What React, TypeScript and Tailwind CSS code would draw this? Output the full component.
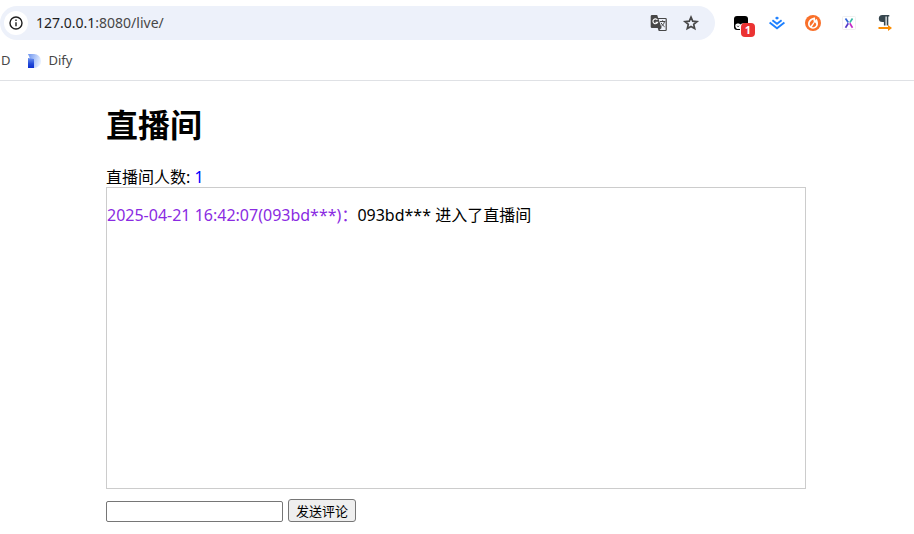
import { useState } from "react";
import type { FormEvent } from "react";

interface Message {
    time: string;
    user: string;
    text: string;
}

const initialMessages: Message[] = [
    { time: "2025-04-21 16:42:07", user: "093bd***", text: "093bd*** 进入了直播间" },
];

function InfoIcon() {
    return (
        <svg viewBox="0 0 16 16" className="h-4 w-4" fill="none" stroke="#1f1f1f" strokeWidth="1.4">
            <circle cx="8" cy="8" r="6" />
            <path d="M8 7.2v4M8 4.6v1.5" />
        </svg>
    );
}

function TranslateIcon() {
    return (
        <svg viewBox="0 0 18 18" className="h-[18px] w-[18px]">
            <path d="M2 1h5.2l1 3h7.3a1.3 1.3 0 0 1 1.3 1.3v10.4a1.3 1.3 0 0 1-1.3 1.3H8.700l-1-3H2A1.3 1.3 0 0 1 .7 12.700V2.300A1.3 1.3 0 0 1 2 1z" fill="#474747" />
            <path d="M8.600 5l3 9-2.200 2h6.200V5z" fill="#edf1fa" />
            <path d="M7.400 6A2.400 2.400 0 1 0 7.600 8.200H5.400" fill="none" stroke="#fff" strokeWidth="1.1" />
            <path d="M10 7.500h5.400M12.600 6.300v1.200M14.500 7.500c-.5 2.400-1.800 3.800-3.200 4.800M11 8.800c.8 1.500 2 2.800 3.600 4" fill="none" stroke="#474747" strokeWidth="1" />
        </svg>
    );
}

function StarIcon() {
    return (
        <svg viewBox="0 0 18 18" className="h-[18px] w-[18px]" fill="none" stroke="#474747" strokeWidth="1.7">
            <path d="M9 3.200l1.700 4 4.300.4-3.300 2.800 1 4.200L9 12.400l-3.700 2.200 1-4.200L3 7.600l4.300-.4z" />
        </svg>
    );
}

function MonkeyIcon() {
    return (
        <svg viewBox="0 0 16 16" className="h-4 w-4">
            <rect x="1" y="1" width="14" height="14" rx="3" fill="#000" />
            <path d="M2.300 10.500c0-1.500 1.500-2 2.700-2 1.200 0 2 .4 2.500 1.100.6-.8 1.500-1.100 2.700-1.100 1.600 0 2.800.6 2.800 2V16H7v-2H4c-1.200-.7-1.700-2-1.700-3.500z" fill="#fff" />
            <path d="M4 10.800c.5.900 1.700.9 2.200 0" fill="none" stroke="#000" strokeWidth="0.8" />
        </svg>
    );
}

function JuejinIcon() {
    return (
        <svg viewBox="0 0 16 16" className="h-4 w-4" fill="none" stroke="#1e80ff" strokeWidth="1.9">
            <path d="M8 1.400l2.100 1.600L8 4.700 5.900 3z" fill="#1e80ff" stroke="none" />
            <path d="M3.400 5.200L8 8.800l4.600-3.600M.6 7.400L8 13.200l7.400-5.800" />
        </svg>
    );
}

function FlameIcon() {
    return (
        <svg viewBox="0 0 16 16" className="h-4 w-4">
            <circle cx="8" cy="8" r="8" fill="#f9702a" />
            <path d="M9.800 2.200C6 3 3 5.500 3 8.800c0 2.800 2.200 4.900 5 4.900s5-2 5-4.900c0-2-.6-3.600-1.500-5l-1 1.700z" fill="#fff" />
            <path d="M8.300 4.500C6 5.500 4.700 7 4.700 9c0 .9.300 1.500.8 2.100L8.800 7zM9.800 7.200L6.900 12c2.300.7 4.300-.6 4.300-2.700 0-.9-.7-1.500-1.400-2.100z" fill="#f9702a" />
        </svg>
    );
}

function CrossIcon() {
    return (
        <svg viewBox="0 0 16 16" className="h-4 w-4" fill="none" strokeWidth="1.7">
            <rect x="1.5" y="1.5" width="13" height="13" rx="1" fill="#fff" stroke="#f0f0f0" strokeWidth="1" />
            <path d="M4.500 3.500L7.300 7.600" stroke="#2f62d8" />
            <path d="M11.500 3.500L8.800 7.600" stroke="#35b9a5" />
            <path d="M7.300 8.200L4.500 12.700" stroke="#5638c8" />
            <path d="M8.800 8.200l2.700 4.500" stroke="#c52bc8" />
        </svg>
    );
}

function PilcrowIcon() {
    return (
        <svg viewBox="0 0 16 16" className="h-4 w-4">
            <path d="M5.300 0h7v1.400h-1V10.500H9.700V1.400H8.500v9.100H6.900V7H5.300a3.500 3.500 0 0 1 0-7z" fill="#37474f" />
            <path d="M1.500 13H12" stroke="#fb8c00" strokeWidth="2" />
            <path d="M11 10l4 3-4 3z" fill="#fb8c00" />
        </svg>
    );
}

function DifyIcon() {
    return (
        <svg viewBox="0 0 14 14" className="h-3.5 w-3.5">
            <defs>
                <linearGradient id="stem" x1="0" y1="0" x2="0" y2="1">
                    <stop offset="0" stopColor="#6c93ef" />
                    <stop offset="0.6" stopColor="#2148d8" />
                    <stop offset="1" stopColor="#0d2fd0" />
                </linearGradient>
                <linearGradient id="bowl" x1="0" y1="0" x2="1" y2="0.3">
                    <stop offset="0" stopColor="#6c93ef" />
                    <stop offset="1" stopColor="#e3edff" />
                </linearGradient>
            </defs>
            <path d="M1 0h6a7 7 0 0 1 0 14z" fill="url(#bowl)" />
            <path d="M1 4l6 1v9H1z" fill="url(#stem)" />
        </svg>
    );
}

function BrowserBar() {
    return (
        <header className="border-b border-[#dfe1e5] bg-white">
            <div className="flex items-center pt-1.5">
                <div className="flex h-[34px] flex-1 items-center rounded-full bg-[#edf1fa] pr-[15px] pl-1">
                    <button aria-label="Site information" className="flex h-6 w-6 items-center justify-center rounded-full bg-white">
                        <InfoIcon />
                    </button>
                    <a href="#" className="ml-2 flex-1 text-sm text-[#474747]">
                        <span className="text-[#1f1f1f]">127.0.0.1</span>:8080/live/
                    </a>
                    <div className="flex gap-3.5">
                        <button aria-label="Translate"><TranslateIcon /></button>
                        <button aria-label="Bookmark"><StarIcon /></button>
                    </div>
                </div>
                <div className="flex gap-5 pr-[21px] pl-[18px]">
                    <button aria-label="Scripts" className="relative">
                        <MonkeyIcon />
                        <span className="absolute top-2 left-2 flex h-3.5 w-3.5 items-center justify-center rounded bg-[#eb3333] text-[11px] font-bold text-white">1</span>
                    </button>
                    <button aria-label="Juejin"><JuejinIcon /></button>
                    <button aria-label="Flame"><FlameIcon /></button>
                    <button aria-label="Cross"><CrossIcon /></button>
                    <button aria-label="Pilcrow"><PilcrowIcon /></button>
                </div>
            </div>
            <nav className="flex h-10 items-center gap-4 pt-0.5 pl-px text-[13px] text-[#474747]">
                <a href="#">D</a>
                <a href="#" className="flex items-center gap-2"><DifyIcon />Dify</a>
            </nav>
        </header>
    );
}

export default function App() {
    const [messages, setMessages] = useState<Message[]>(initialMessages);
    const [comment, setComment] = useState("");

    const send = (e: FormEvent) => {
        e.preventDefault();
        if (!comment.trim()) return;
        const time = new Date().toLocaleString("sv-SE");
        setMessages([...messages, { time, user: "093bd***", text: comment }]);
        setComment("");
    };

    return (
        <div className="bg-white font-['Noto_Sans','Noto_Sans_CJK_SC',sans-serif] text-black">
            <BrowserBar />
            <main className="pr-0.5">
                <div className="mx-auto max-w-[700px] pt-[22px]">
                    <h1 className="text-[32px] leading-[44px] font-bold">直播间</h1>
                    <div className="mt-5 text-base leading-5">
                        直播间人数: <span className="text-[#0000ff]">1</span>
                    </div>
                    <div className="min-h-[302px] border border-[#cccccc] py-4">
                        {messages.map((m, i) => (
                            <p key={i} className="text-base leading-[22px]">
                                <span className="text-[#8a2be2]">{m.time}({m.user})：</span>
                                {m.text}
                            </p>
                        ))}
                    </div>
                    <form onSubmit={send} className="mt-2.5 flex items-end gap-[5px]">
                        <input
                            aria-label="评论"
                            value={comment}
                            onChange={(e) => setComment(e.target.value)}
                            className="h-[21px] w-[177px] rounded-xs border border-[#767676] px-0.5 text-[13px]"
                        />
                        <button type="submit" className="h-[23px] rounded-[3px] border border-[#767676] bg-[#efefef] px-[7px] text-[13px] leading-5">
                            发送评论
                        </button>
                    </form>
                </div>
            </main>
        </div>
    );
}
